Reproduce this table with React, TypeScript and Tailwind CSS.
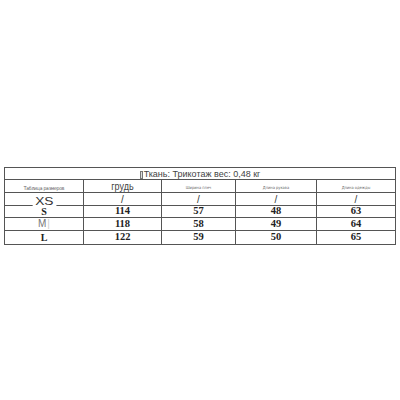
const sizes = [
  { size: "XS", sans: true, vals: ["/", "/", "/", "/"], h: "h-[13px]" },
  { size: "S", vals: ["114", "57", "48", "63"], h: "h-[12px]" },
  { size: "M", sans: true, muted: true, vals: ["118", "58", "49", "64"], h: "h-[13px]" },
  { size: "L", vals: ["122", "59", "50", "65"], h: "h-[14px]" },
];

const labels = ["Ширина плеч", "Длина рукава", "Длина одежды"];

const cols = "grid grid-cols-[79px_78px_74px_81px_79px]";
const cell = "border-r border-[#555] flex items-center justify-center";

export default function App() {
  return (
    <div className="w-[400px] h-[400px] bg-white pt-[167px] pl-[4px] font-['Liberation_Sans',Arial,sans-serif] text-[#333]">
      <div className="w-[392px] border-l border-t border-[#555]">
        {/* title row */}
        <div className="h-[12px] border-b border-r border-[#555] flex items-center justify-center">
          <div className="flex items-center gap-[1px] text-[9px] leading-none text-[#444] relative top-[1px]">
            <span className="inline-block w-[3px] h-[8px] border border-[#777] bg-[#ddd]" />
            <span>Ткань: Трикотаж вес: 0,48 кг</span>
          </div>
        </div>

        {/* label row */}
        <div className={`${cols} h-[13px] border-b border-[#555]`}>
          <div className={cell}>
            <span className="relative top-[2px] bg-white px-[2px] text-[5px] leading-none text-[#555] font-['DejaVu_Sans_Condensed',sans-serif] tracking-[-0.2px]">
              Таблица размеров
            </span>
          </div>
          <div className={cell}>
            <span className="relative top-[1px] bg-white px-[2px] text-[10px] leading-none text-[#444] scale-x-90">
              грудь
            </span>
          </div>
          {labels.map((l) => (
            <div key={l} className={cell}>
              <span className="relative top-[2px] bg-white px-[2px] text-[4px] leading-none text-[#666] font-['DejaVu_Sans_Condensed',sans-serif]">
                {l}
              </span>
            </div>
          ))}
        </div>

        {sizes.map((r) => (
          <div key={r.size} className={`${cols} ${r.h} border-b border-[#555]`}>
            <div className={cell}>
              {r.sans ? (
                <span
                  className={`relative bg-white px-[2px] leading-none ${
                    r.muted ? "text-[10px] text-[#777] top-0" : "text-[11px] text-[#333] top-[2px] scale-x-125"
                  }`}
                >
                  {r.size}
                  {r.muted && <span className="text-[#ccc] ml-[1px]">|</span>}
                </span>
              ) : (
                <span className="font-['Liberation_Serif',serif] font-bold text-[10px] leading-none text-[#222]">
                  {r.size}
                </span>
              )}
            </div>
            {r.vals.map((v, i) =>
              v === "/" ? (
                <div key={i} className={cell}>
                  <span className="text-[10px] leading-none text-[#333] relative top-[1px]">/</span>
                </div>
              ) : (
                <div key={i} className={cell}>
                  <span className="font-['Liberation_Serif',serif] font-bold text-[10.5px] leading-none text-[#222]">
                    {v}
                  </span>
                </div>
              )
            )}
          </div>
        ))}
      </div>
    </div>
  );
}
